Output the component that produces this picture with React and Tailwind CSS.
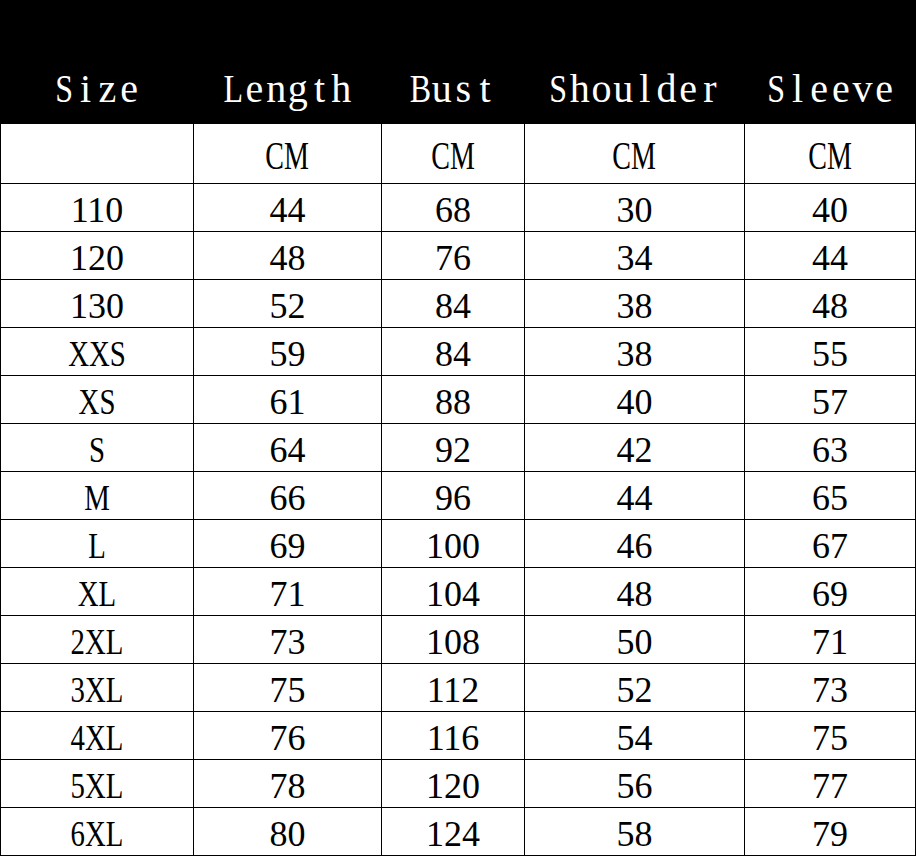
const columns = ['Size', 'Length', 'Bust', 'Shoulder', 'Sleeve'];

const rows = [
  ['110', '44', '68', '30', '40'],
  ['120', '48', '76', '34', '44'],
  ['130', '52', '84', '38', '48'],
  ['XXS', '59', '84', '38', '55'],
  ['XS', '61', '88', '40', '57'],
  ['S', '64', '92', '42', '63'],
  ['M', '66', '96', '44', '65'],
  ['L', '69', '100', '46', '67'],
  ['XL', '71', '104', '48', '69'],
  ['2XL', '73', '108', '50', '71'],
  ['3XL', '75', '112', '52', '73'],
  ['4XL', '76', '116', '54', '75'],
  ['5XL', '78', '120', '56', '77'],
  ['6XL', '80', '124', '58', '79'],
];

const grid = 'grid grid-cols-[193px_188px_143px_220px_172px]';
const cellGrid = 'grid grid-cols-[192px_187px_142px_219px_170px] gap-px';

// header uses a thin monospaced serif; no serif mono is installed, so each
// letter gets a fixed-width box (capitals squeezed to fit it)
function MonoWord({ text }) {
  return (
    <span className="flex">
      {text.split('').map((ch, i) => (
        <span key={i} className="inline-flex w-[21.7px] justify-center">
          <span className={ch === ch.toUpperCase() ? 'inline-block scale-x-[0.8]' : 'inline-block'}>
            {ch}
          </span>
        </span>
      ))}
    </span>
  );
}

function SizeLabel({ value }) {
  // the reference sets letters in a narrow serif, digits at normal width
  if (/^\d+$/.test(value)) return <span>{value}</span>;
  return <span className="inline-block scale-x-[0.8]">{value}</span>;
}

export default function App() {
  return (
    <div className="w-[916px] h-[857px] bg-white font-['Liberation_Serif',serif] text-black">
      <div className={`${grid} h-[124px] bg-black items-end pb-[15px]`}>
        {columns.map((c) => (
          <div key={c} className="flex justify-center text-[40px] leading-none text-white">
            <MonoWord text={c} />
          </div>
        ))}
      </div>

      <div className={`${cellGrid} bg-black px-px pb-px`}>
        <div className="h-[59px] bg-white" />
        {columns.slice(1).map((c) => (
          <div key={c} className="h-[59px] bg-white flex items-center justify-center pt-[5px]">
            <span className="inline-block text-[40px] leading-none scale-x-[0.7]">CM</span>
          </div>
        ))}

        {rows.map((r) =>
          r.map((v, i) => (
            <div
              key={r[0] + i}
              className="h-[47px] bg-white flex items-center justify-center pt-[4px] text-[36px] leading-none"
            >
              {i === 0 ? <SizeLabel value={v} /> : v}
            </div>
          )),
        )}
      </div>
    </div>
  );
}
